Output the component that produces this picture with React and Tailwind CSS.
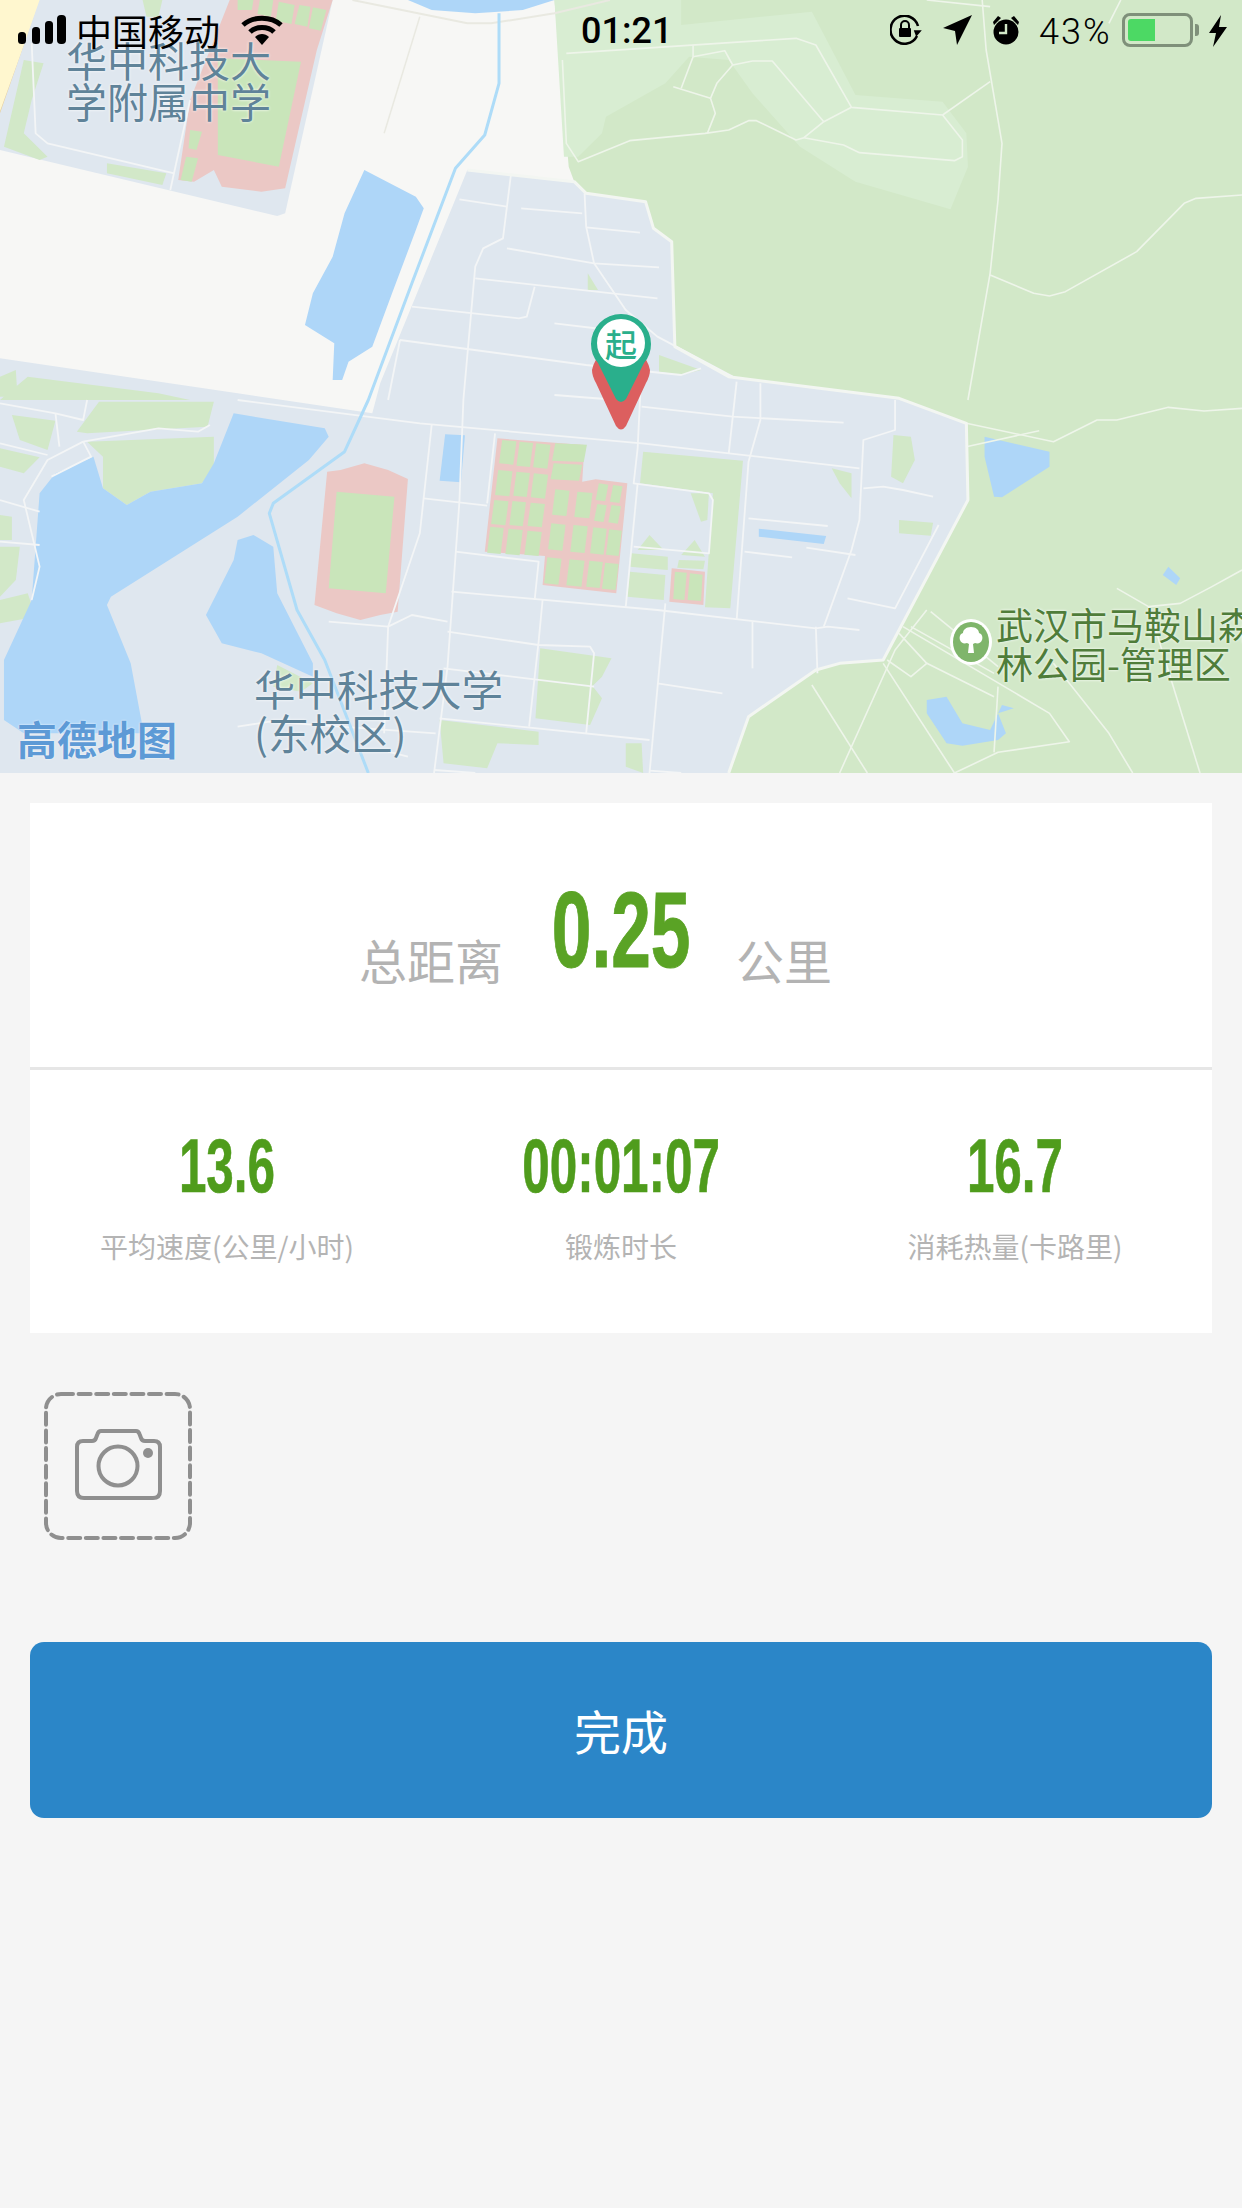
const GREEN = '#d2e8c8';
const WATER = '#aed6f8';
const PINK = '#ebc8c5';

// map coords are taken from the zoomed crops: x 0-1568, y 0-2319, stretched to 1242x773
const campus = '590,510 725,545 740,580 815,605 825,685 848,725 852,1040 920,1130 1135,1195 1220,1270 1222,1500 1115,1980 1060,1990 1030,2010 945,2150 920,2319 0,2319 0,1075 300,1180 470,1240 480,1150';
const hill = '700,0 1568,0 1568,2319 920,2319 945,2150 1030,2010 1060,1990 1115,1980 1222,1500 1220,1270 1135,1195 920,1130 852,1040 848,725 825,685 815,605 740,580 725,545 718,500';
const lightHill = '700,0 860,0 860,75 1025,35 1080,285 1190,305 1220,400 1222,500 1200,628 1080,545 1010,440 950,280 920,180 870,170 840,250 765,350 760,400 730,470 712,470';

const greens = [
  '30,180 55,190 40,300 30,400 60,470 50,480 5,440',
  '135,490 210,520 205,555 135,520',
  '180,0 205,0 200,50 185,50',
  '125,1205 270,1205 262,1280 110,1300 97,1295',
  '110,1325 270,1310 270,1400 255,1450 190,1475 160,1515 130,1465 130,1370',
  '0,1130 20,1110 22,1190 0,1190',
  '35,1130 200,1180 240,1200 0,1200',
  '15,1245 70,1262 60,1350 25,1320',
  '0,1345 50,1372 30,1420 0,1400',
  '0,1545 15,1550 15,1620 0,1620',
  '0,1640 25,1640 20,1740 0,1790',
  '0,1800 35,1780 45,1850 0,1870',
  '812,1355 938,1382 922,1825 890,1822 900,1480 808,1450',
  '820,1605 838,1650 805,1650',
  '877,1620 890,1670 860,1665',
  '797,1660 843,1670 843,1710 795,1700',
  '857,1680 890,1682 888,1708 855,1703',
  '795,1715 840,1725 838,1800 792,1790',
  '872,1480 895,1480 893,1560 885,1565',
  '1128,1305 1150,1310 1155,1380 1140,1450 1125,1430',
  '1050,1405 1075,1420 1075,1495 1060,1450',
  '1135,1560 1178,1568 1175,1607 1135,1600',
  '682,1945 772,1975 760,2030 748,2058 760,2095 745,2175 676,2155',
  '555,2160 680,2195 680,2235 628,2230 615,2305 560,2290',
  '790,2230 810,2230 812,2319 790,2300',
  '350,1995 395,2050 380,2075 345,2060',
  '832,1065 885,1110 860,1125 832,1115',
  '742,820 755,870 742,870',
];

const waters = [
  '515,0 700,0 660,30 600,40 545,30',
  '460,510 525,590 535,625 525,690 495,880 470,1040 440,1085 432,1140 420,1140 422,1030 385,975 395,880 420,770 435,640',
  '295,1240 410,1285 415,1310 390,1380 300,1550 140,1790 135,1815 165,1990 180,2180 178,2200 30,2200 5,2160 5,1980 40,1800 50,1480 70,1420 118,1370 130,1465 160,1515 190,1475 255,1450 270,1390',
  '320,1605 345,1640 350,1780 395,1990 395,2030 330,1960 280,1930 260,1845 295,1680 300,1620',
  '562,1303 587,1306 582,1447 555,1442',
  '958,1586 1043,1608 1040,1632 958,1610',
  '1243,1310 1325,1355 1325,1400 1265,1492 1255,1490 1243,1370',
  '1475,1700 1490,1735 1485,1755 1468,1725',
  '1170,2100 1195,2090 1215,2170 1250,2190 1265,2115 1280,2125 1260,2140 1270,2200 1260,2220 1215,2237 1195,2230 1170,2140',
];

const cells = [
  [630, 120, 18, 70], [652, 125, 17, 72], [673, 130, 18, 72], [697, 130, 40, 52], [695, 190, 36, 48],
  [625, 210, 18, 75], [648, 215, 17, 72], [670, 220, 18, 72],
  [620, 300, 18, 72], [643, 303, 17, 72], [666, 308, 18, 70],
  [615, 380, 17, 78], [638, 386, 18, 76], [662, 392, 18, 72],
  [752, 250, 12, 50], [770, 255, 12, 50],
  [697, 268, 18, 76], [725, 275, 19, 76], [750, 312, 12, 50], [768, 315, 12, 52],
  [692, 370, 18, 78], [720, 375, 18, 80], [745, 382, 17, 78], [765, 388, 16, 76],
  [687, 472, 18, 78], [715, 478, 19, 78], [740, 482, 17, 78], [760, 488, 17, 78],
];

const roads = [
  '645,525 635,715 610,745 600,800 585,1200 580,1505 565,2000 548,2319',
  '580,598 640,620', '658,625 735,640', '738,580 740,680 750,790 790,930 830,1010 925,1130',
  '740,682 808,698', '640,745 750,790 832,802', '600,835 830,895',
  '675,860 665,950 655,955 520,920', '505,1020 740,1095 860,1125 885,1105', '505,1020 490,1200',
  '700,970 770,990', '700,1185 780,1200', '930,1145 920,1360', '960,1150 960,1260 945,1385 930,1860',
  '810,1100 805,1345 800,1450 895,1480 900,1500 895,1660 800,1640', '805,1450 790,1820',
  '810,1220 925,1250 1065,1268', '300,1200 530,1270 810,1330 1085,1405',
  '545,1275 530,1600 490,1880 485,2200', '625,1300 615,1510', '535,1495 615,1517',
  '575,1655 680,1685 675,1800', '570,1775 830,1830 1030,1885 1045,1880 1085,1890',
  '685,1800 680,1925 668,2180', '840,1810 820,2319',
  '1130,1200 1130,1290 1090,1320 1085,1560 1075,1650 1040,1880', '1090,1465 1115,1460 1140,1470 1178,1490',
  '1070,1795 1130,1825 1185,1575', '945,1555 1045,1578', '940,1655 1000,1672', '1018,1643 1080,1665',
  '950,1865 950,2005', '1030,1880 1032,2020', '415,1865 490,1880 520,1845 565,1865',
  '565,1895 680,1935 745,1940 750,1960 740,2200', '560,2005 750,2060', '830,2050 912,2080',
  '555,2155 820,2220', '300,2180 340,2165 550,2200', '490,2255 515,2270', '548,2310 600,2319', '820,2312 860,2319',
  '0,1210 70,1240 105,1260 110,1200', '70,1240 75,1340', '0,1330 60,1365', '0,1500 50,1535', '0,1625 50,1635',
  '105,1325 60,1380 30,1500 50,1700 40,1800', '105,1325 200,1285 250,1295 265,1275', '105,1325 115,1370 65,1430',
  '40,130 45,400 60,430 220,520', '215,570 240,300',
];

const campusEdge = '590,510 725,545 740,580 815,605 825,685 848,725 852,1040 920,1130 1135,1195 1220,1270 1222,1500 1115,1980 1060,1990 1030,2010 945,2150 920,2319';

const forestRoads = [
  '715,160 1005,115 1030,135 1075,322 1190,345 1215,420 1215,470 1205,482 1085,458 1065,435 1015,413 1040,365 1075,322',
  '710,180 715,430 730,485 795,422 890,400 920,390 945,362 955,362 1005,420 1015,413',
  '875,135 875,170 860,265', '875,170 915,152 925,195 905,250 897,295 903,340 893,400', '850,260 897,295',
  '925,195 950,183 975,183 1040,365', '1190,345 1250,245', '1170,0 1250,20',
  '1240,0 1245,150 1265,430 1260,600 1250,820 1222,1200',
  '1250,825 1305,880 1325,888 1345,875 1435,755 1495,610 1510,595 1568,585', '1415,0 1400,70',
  '1220,1270 1330,1325 1385,1260 1410,1260 1475,1222 1520,1233 1568,1225', '1220,1340 1312,1292',
  '1140,1880 1325,2140 1350,2225 1260,2257 1205,2319', '1260,2060 1255,2257', '1115,1990 1205,2319',
  '1170,1830 1130,1950 1060,2319', '1025,2055 1095,2319', '1410,1765 1450,1820 1490,1810 1530,1760 1568,1710',
  '1330,1990 1400,2200 1430,2319', '1450,1820 1515,2319', '1170,1990 1255,2090', '1135,1900 1170,1990 1150,2030 1120,1980',
  '1175,1835 1260,2000', '1150,1880 1255,2020',
];

const Line = ({ points, color, width }) => (
  <polyline points={points} fill="none" stroke={color} strokeWidth={width} strokeLinejoin="round" vectorEffect="non-scaling-stroke" />
);

const MapDrawing = () => (
  <svg viewBox="0 0 1568 2319" preserveAspectRatio="none" className="absolute inset-0 w-full h-full">
    <rect width="1568" height="2319" fill="#f7f7f5" />
    <polygon points="0,0 52,0 0,340" fill="#fff7cf" />
    <Line points="52,0 0,340" color="#e6cf9e" width={1.5} />
    <polygon points="50,0 420,0 360,640 350,648 0,450 0,340" fill="#dfe7ef" />
    <polygon points={campus} fill="#dfe7ef" />
    <polygon points={hill} fill={GREEN} />
    <polygon points={lightHill} fill="#d8edd2" />
    {/* school grounds top left */}
    <polygon points="290,0 420,0 400,150 360,565 330,575 280,560 270,510 245,545 225,540 240,300" fill={PINK} />
    <polygon points="275,175 380,185 352,500 275,465" fill="#c9e5ba" />
    <polygon points="300,0 320,0 318,30 300,30" fill="#c9e5ba" />
    <polygon points="328,0 345,0 342,50 325,42" fill="#c9e5ba" />
    <polygon points="352,5 372,15 368,72 348,62" fill="#c9e5ba" />
    <polygon points="378,15 392,20 388,80 372,72" fill="#c9e5ba" />
    <polygon points="395,22 412,30 405,92 390,85" fill="#c9e5ba" />
    <polygon points="240,390 255,395 248,450 238,445" fill="#c9e5ba" />
    <polygon points="235,470 250,475 242,545 228,540" fill="#c9e5ba" />
    {/* stadium and dorm blocks */}
    <polygon points="430,1410 460,1390 490,1410 515,1437 502,1835 480,1845 455,1860 425,1840 397,1815 413,1415" fill={PINK} />
    <polygon points="425,1475 498,1490 487,1780 415,1765" fill="#c9e5ba" />
    <polygon points="628,1315 738,1335 735,1445 752,1438 792,1450 778,1780 685,1755 688,1668 612,1655" fill={PINK} />
    <polygon points="848,1705 890,1715 888,1815 845,1805" fill={PINK} />
    {greens.map((p) => <polygon key={p} points={p} fill={GREEN} />)}
    <polygon points="852,1715 867,1718 864,1800 850,1797" fill="#c9e5ba" />
    <polygon points="871,1720 887,1724 885,1803 868,1800" fill="#c9e5ba" />
    {cells.map(([x, y, w, h]) => (
      <polygon
        key={`${x}-${y}`}
        points={`${x + 4},${y + 1200} ${x + w + 4},${y + 1204} ${x + w},${y + h + 1204} ${x},${y + h + 1200}`}
        fill="#c9e5ba"
      />
    ))}
    {waters.map((p) => <polygon key={p} points={p} fill={WATER} />)}
    <Line points="445,0 590,70 620,70 700,40 770,0" color="#e9e9e1" width={2} />
    <Line points="530,50 485,400" color="#e9e9e1" width={1.5} />
    {roads.map((p) => <Line key={p} points={p} color="#f3f5f6" width={1.8} />)}
    {forestRoads.map((p) => <Line key={p} points={p} color="#eef5ea" width={1.6} />)}
    <Line points={campusEdge} color="#f3f6f2" width={3} />
    <Line points="630,40 630,250 612,405 575,505 520,850 465,1200 435,1355 345,1510 340,1540 375,1830 410,1980 465,2319" color="#aedcf8" width={3} />
  </svg>
);

const StartPin = () => (
  <div className="absolute left-[585px] top-[305px] w-[72px] h-[130px]">
    <svg width="72" height="130" viewBox="0 0 72 130" className="block">
      <path d="M7 65 A29.5 29.5 0 0 1 65 65 Q65 71 61 78 L41 121 Q36 128 31 121 L11 78 Q7 71 7 65Z" fill="#dc5f5f" />
      <path d="M6 39 A30 30 0 0 1 66 39 Q66 50 59 58 L41 94 Q36 100 31 94 L13 58 Q6 50 6 39Z" fill="#2aaf8c" />
      <circle cx="36" cy="38" r="24" fill="#fff" />
    </svg>
    <span className="absolute left-0 top-[17px] w-[72px] text-center text-[32px] leading-[42px] font-medium text-[#2aaf8c] [font-family:'Noto_Sans_CJK_SC',sans-serif]">起</span>
  </div>
);

const ParkIcon = () => (
  <svg width="44" height="48" viewBox="0 0 44 48" className="absolute left-[949px] top-[618px]">
    <ellipse cx="22" cy="24" rx="21" ry="23" fill="#fff" />
    <ellipse cx="22" cy="24" rx="18" ry="20" fill="#7fb56b" />
    <path d="M22 9c-5 0-8 3-8 6-3 1-4 4-3 7 1 3 4 4 7 3l2 1-1 9h6l-1-9 2-1c3 1 6 0 7-3 1-3 0-6-3-7 0-3-3-6-8-6z" fill="#fff" />
  </svg>
);

const StatusBar = () => (
  <div className="absolute top-0 left-0 right-0 h-[60px] flex items-start text-black [font-family:Roboto,sans-serif]">
    <div className="w-[581px] flex items-start pl-[18px]">
      <svg width="48" height="29" viewBox="0 0 48 29" className="mt-[15px]">
        <rect x="0" y="17" width="8" height="12" rx="3.5" />
        <rect x="14" y="12" width="8" height="17" rx="3.5" />
        <rect x="27" y="6" width="8" height="23" rx="3.5" />
        <rect x="39" y="0" width="9" height="29" rx="4" />
      </svg>
      <span className="ml-[10px] text-[36px] leading-[36px] mt-[12px] [font-family:'Noto_Sans_CJK_SC',sans-serif]">中国移动</span>
      <svg width="42" height="30" viewBox="0 0 42 30" className="ml-[21px] mt-[15px]" fill="none" stroke="#000" strokeWidth="5">
        <path d="M2 10C12 1 30 1 40 10" />
        <path d="M9 17C15 11 27 11 33 17" />
        <path d="M14 22L21 30L28 22C24 18 18 18 14 22Z" fill="#000" stroke="none" />
      </svg>
    </div>
    <span className="w-[92px] text-[36px] leading-[36px] mt-[13px] font-medium">01:21</span>
    <div className="ml-auto flex items-start pr-[15px]">
      <svg width="33" height="30" viewBox="0 0 33 30" className="mt-[15px]" fill="none" stroke="#000" strokeWidth="2.6">
        <path d="M27 21A14 14 0 1 1 28 11" />
        <path d="M26 21L33 10H23Z" transform="translate(-1 2) scale(.8 .6) translate(8 12)" fill="#000" stroke="none" />
        <rect x="9" y="13" width="12" height="9" rx="1" fill="#000" stroke="none" />
        <path d="M11 13V10a4 4 0 0 1 8 0v3" strokeWidth="2" />
      </svg>
      <svg width="29" height="30" viewBox="0 0 29 30" className="ml-[20px] mt-[15px]">
        <path d="M29 0L14 30L12 16L0 13Z" />
      </svg>
      <svg width="28" height="30" viewBox="0 0 28 30" className="ml-[20px] mt-[15px]">
        <circle cx="14" cy="17" r="12.5" />
        <path d="M14 9V18H7" fill="none" stroke="#d2e8c8" strokeWidth="2.4" />
        <path d="M1 7L6 1L9 3L2 10Z M27 7L22 1L19 3L26 10Z" />
      </svg>
      <span className="ml-[19px] w-[73px] text-[36px] leading-[36px] mt-[14px] font-light tracking-[2px]">43%</span>
      <div className="ml-[10px] mt-[13px] flex items-center">
        <div className="w-[71px] h-[34px] rounded-[8px] border-[3px] border-[#7f907a] p-[3px]">
          <div className="w-[27px] h-full rounded-l-[3px] bg-[#4cd964]" />
        </div>
        <div className="ml-[2px] w-[4px] h-[12px] rounded-r-[3px] bg-[#7f907a]" />
      </div>
      <svg width="18" height="32" viewBox="0 0 18 32" className="ml-[10px] mt-[15px]">
        <path d="M12 0L0 18H7L4 32L18 12H10Z" />
      </svg>
    </div>
  </div>
);

const Stat = ({ value, width, label }) => (
  <div className="flex flex-col items-center">
    <div className="h-[66px] flex items-center justify-center" style={{ width }}>
      <span className="inline-block origin-center scale-x-[0.65] text-[#4f9c1c] text-[76px] leading-[66px] font-bold whitespace-nowrap [-webkit-text-stroke:0.6px_#4f9c1c] [font-family:'Liberation_Sans',sans-serif]">{value}</span>
    </div>
    <span className="mt-[30px] text-[#b4b4b4] text-[28px] leading-[34px] whitespace-nowrap">{label}</span>
  </div>
);

export default function App() {
  return (
    <div className="w-[1242px] min-h-[2208px] bg-[#f5f5f5] [font-family:'Noto_Sans_CJK_SC',sans-serif]">
      {/* Map */}
      <div className="relative h-[773px] overflow-hidden">
        <MapDrawing />
        <div className="absolute left-[66px] top-[39px] text-[41px] leading-[41px] text-[#5f8399] [text-shadow:0_0_3px_#fff]">华中科技大<br />学附属中学</div>
        <div className="absolute left-[254px] top-[666px] text-[41.5px] leading-[44px] text-[#5f8399] [text-shadow:0_0_3px_#fff]">华中科技大学<br />(东校区)</div>
        <div className="absolute left-[996px] top-[605px] text-[37px] leading-[39px] text-[#4f7d3a] whitespace-nowrap [text-shadow:0_0_3px_#fff]">武汉市马鞍山森<br />林公园-管理区</div>
        <div className="absolute left-[17px] top-[716px] text-[40px] leading-[44px] font-bold text-[#5d9ad6] [text-shadow:0_0_2px_#fff]">高德地图</div>
        <ParkIcon />
        <StartPin />
        <StatusBar />
      </div>

      {/* Summary card */}
      <div className="mx-[30px] mt-[30px] bg-white">
        <div className="h-[264px] grid grid-cols-[1fr_136px_1fr] gap-x-[50px] items-start">
          <span className="justify-self-end mt-[128px] text-[48px] leading-[56px] text-[#b3b3b3]">总距离</span>
          <div className="mt-[72px] h-[110px] flex items-center justify-center">
            <span className="inline-block scale-x-[0.66] text-[#5aa325] text-[108px] leading-[110px] font-bold whitespace-nowrap [-webkit-text-stroke:1px_#5aa325] [font-family:'Liberation_Sans',sans-serif]">0.25</span>
          </div>
          <span className="justify-self-start -ml-[3px] mt-[128px] text-[48px] leading-[56px] text-[#b3b3b3]">公里</span>
        </div>
        <div className="h-[3px] bg-[#e6e6e6]" />
        <div className="h-[263px] grid grid-cols-3 pt-[63px]">
          <Stat value="13.6" width={93} label="平均速度(公里/小时)" />
          <Stat value="00:01:07" width={192} label="锻炼时长" />
          <Stat value="16.7" width={93} label="消耗热量(卡路里)" />
        </div>
      </div>

      {/* Photo picker */}
      <div className="ml-[44px] mt-[59px] w-[148px] h-[148px]">
        <svg width="148" height="148" viewBox="0 0 148 148" className="block">
          <rect x="2" y="2" width="144" height="144" rx="15" fill="none" stroke="#8f8f8f" strokeWidth="4" strokeDasharray="12 5.6" strokeLinecap="round" />
          <g transform="translate(31 37)" fill="none" stroke="#8f8f8f" strokeWidth="4">
            <path d="M8 12H17Q20 12 21 9L22.5 5Q23.5 2 26 2H61Q63.5 2 64.5 5L66 9Q67 12 70 12H79Q85 12 85 18V62Q85 69 78 69H9Q2 69 2 62V18Q2 12 8 12Z" />
            <circle cx="43" cy="37" r="19.5" />
            <circle cx="73" cy="24" r="5" fill="#8f8f8f" stroke="none" />
          </g>
        </svg>
      </div>

      {/* Finish button */}
      <div className="mx-[30px] mt-[102px] h-[176px] rounded-[14px] bg-[#2b86c8] flex items-center justify-center text-white text-[47px]">
        完成
      </div>
    </div>
  );
}
